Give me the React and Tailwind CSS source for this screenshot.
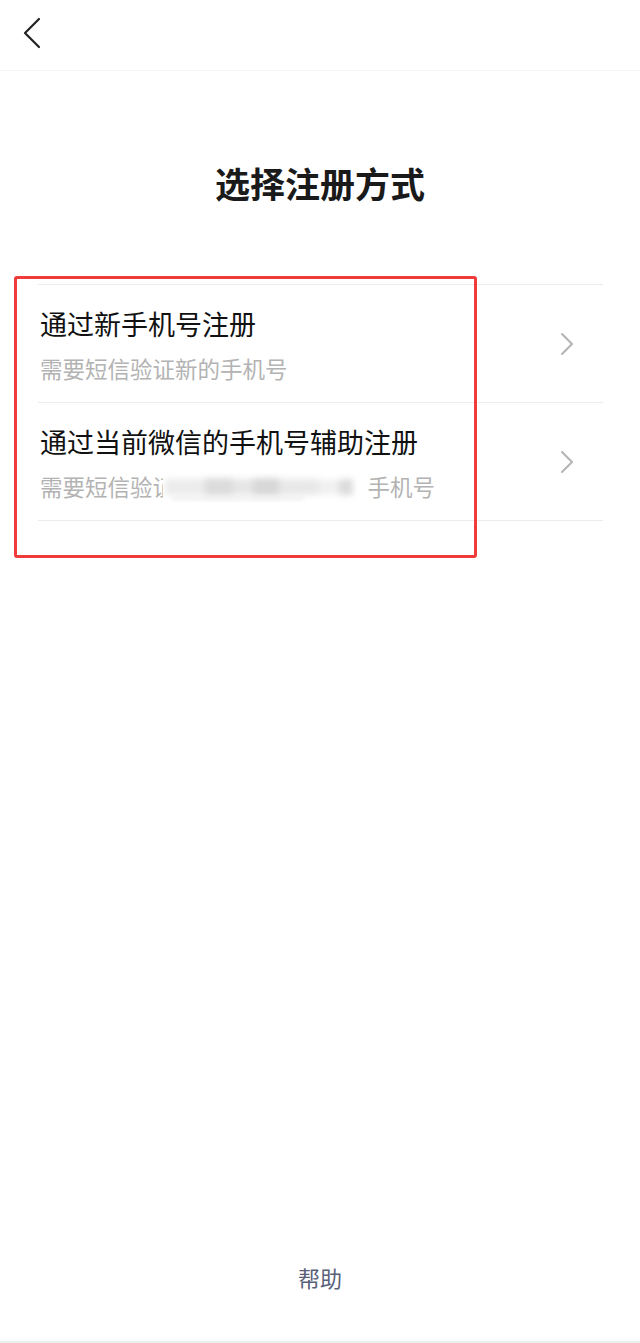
import React from "react";

const font = { fontFamily: '"Noto Sans CJK SC", "Noto Sans", sans-serif' };

function Chevron() {
  return (
    <svg width="14" height="24" viewBox="0 0 14 24" className="shrink-0">
      <path d="M2 2 L12 12 L2 22" fill="none" stroke="#b4b4b4" strokeWidth="2" strokeLinecap="round" strokeLinejoin="round" />
    </svg>
  );
}

export default function App() {
  return (
    <div className="relative min-h-[1343px] w-[640px] bg-white flex flex-col font-['Noto_Sans_CJK_SC','Noto_Sans',sans-serif]" style={font}>
      {/* header */}
      <div className="h-[71px] border-b border-[#f4f4f4] flex items-center">
        <svg width="20" height="32" viewBox="0 0 20 32" className="ml-[22px] -mt-[5px]">
          <path d="M17 2 L3 16 L17 30" fill="none" stroke="#222" strokeWidth="2.2" strokeLinecap="round" strokeLinejoin="round" />
        </svg>
      </div>

      <h1 className="mt-[88px] text-center text-[35px] leading-[48px] font-bold text-[#1a1a1a]">选择注册方式</h1>

      <div className="mt-[77px] ml-[38px] mr-[37px] border-t border-[#ececec]">
        <div className="flex items-center border-b border-[#ececec]">
          <div className="flex-1 pl-[2px] pt-[21px] pb-[18px]">
            <div className="text-[27px] leading-[36px] text-[#111]">通过新手机号注册</div>
            <div className="mt-[11px] text-[22.5px] leading-[31px] text-[#b3b3b3]">需要短信验证新的手机号</div>
          </div>
          <div className="mr-[29px] mt-[1px]"><Chevron /></div>
        </div>
        <div className="flex items-center border-b border-[#ececec]">
          <div className="flex-1 pl-[2px] pt-[21px] pb-[18px]">
            <div className="text-[27px] leading-[36px] text-[#111]">通过当前微信的手机号辅助注册</div>
            <div className="mt-[11px] text-[22.5px] leading-[31px] text-[#b3b3b3] flex items-center whitespace-nowrap">
              <span>需要短信验</span>
              <span className="relative inline-block w-[215px] h-[31px] overflow-hidden">
                <span className="absolute left-0 top-0">证</span>
                <span className="absolute left-[10px] top-[0px] w-[205px] h-[31px] bg-white"></span>
                <span className="absolute left-[12px] top-[6px] h-[20px] blur-[3px] flex items-center">
                  <span className="w-[40px] h-[16px] bg-[#ececec]"></span>
                  <span className="w-[28px] h-[18px] bg-[#dcdcdc]"></span>
                  <span className="w-[20px] h-[16px] bg-[#e6e6e6]"></span>
                  <span className="w-[26px] h-[18px] bg-[#d8d8d8]"></span>
                  <span className="w-[40px] h-[16px] bg-[#e8e8e8]"></span>
                  <span className="w-[20px] h-[14px] bg-[#f0f0f0]"></span>
                  <span className="w-[14px] h-[16px] bg-[#dcdcdc]"></span>
                </span>
                <span className="absolute left-[20px] top-[25px] w-[130px] h-[4px] bg-[#eeeeee] blur-[2px]"></span>
              </span>
              <span>手机号</span>
            </div>
          </div>
          <div className="mr-[29px] mt-[1px]"><Chevron /></div>
        </div>
      </div>

      <div className="flex-1" />

      <div className="text-center text-[22px] leading-[30px] text-[#586079] pb-[49px] border-b-2 border-[#efefef]">帮助</div>

      {/* red annotation box */}
      <div className="absolute left-[14px] top-[276px] w-[463px] h-[282px] border-[3px] border-[#f03b3b] rounded-[3px] pointer-events-none" />
    </div>
  );
}
